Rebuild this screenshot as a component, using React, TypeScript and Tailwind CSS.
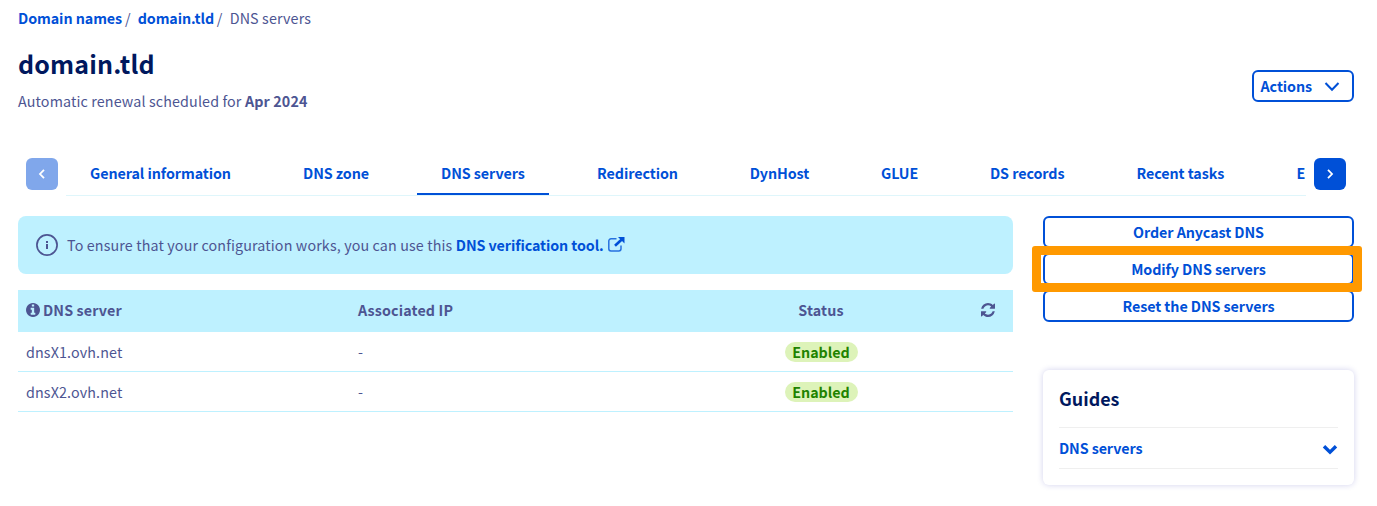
import type { ReactNode } from "react";

const TABS: { label: string; width: string; active?: boolean }[] = [
  { label: "General information", width: "w-[189px]" },
  { label: "DNS zone", width: "w-[114px]" },
  { label: "DNS servers", width: "w-[132px]", active: true },
  { label: "Redirection", width: "w-[128.7px]" },
  { label: "DynHost", width: "w-[107.3px]" },
  { label: "GLUE", width: "w-[85px]" },
  { label: "DS records", width: "w-[122.5px]" },
  { label: "Recent tasks", width: "w-[136px]" },
  { label: "E", width: "w-[58px]" },
];

const SERVERS = ["dnsX1.ovh.net", "dnsX2.ovh.net"];

const COLS = "grid grid-cols-[332px_387px_152px_1fr] items-center px-2";

function InfoOutline() {
  return (
    <svg width="22" height="22" viewBox="0 0 22 22" fill="none" className="block shrink-0">
      <circle cx="11" cy="11" r="10.1" stroke="#4d5592" strokeWidth="1.7" />
      <path d="M10 7h2v2h-2zM10 10h2v5h-2z" fill="#4d5592" />
    </svg>
  );
}

function InfoSolid() {
  return (
    <svg width="14" height="14" viewBox="0 0 1536 1536" className="block shrink-0" fill="#4d5592">
      <path d="M1024 1248v-160q0-14-9-23t-23-9h-96V544q0-14-9-23t-23-9H544q-14 0-23 9t-9 23v160q0 14 9 23t23 9h96v320h-96q-14 0-23 9t-9 23v160q0 14 9 23t23 9h448q14 0 23-9t9-23zM896 352V192q0-14-9-23t-23-9H672q-14 0-23 9t-9 23v160q0 14 9 23t23 9h192q14 0 23-9t9-23zm640 416q0 209-103 385.500T1153.500 1433 768 1536t-385.500-103T103 1153.500 0 768t103-385.500T382.500 103 768 0t385.500 103T1433 382.500 1536 768z" />
    </svg>
  );
}

function Refresh() {
  return (
    <svg width="14" height="14" viewBox="0 0 1536 1536" className="block" fill="#4d5592">
      <path d="M1511 928q0 5-1 7-64 268-268 434.500T764 1536q-146 0-282.500-55T238 1324l-129 129q-19 19-45 19t-45-19-19-45V960q0-26 19-45t45-19h448q26 0 45 19t19 45-19 45l-137 137q71 66 161 102t187 36q134 0 250-65t186-179q11-17 53-117 8-23 30-23h192q13 0 22.500 9.500t9.500 22.500zm25-800v448q0 26-19 45t-45 19h-448q-26 0-45-19t-19-45 19-45l138-138Q969 256 768 256q-134 0-250 65T332 500q-11 17-53 117-8 23-30 23H50q-13 0-22.500-9.500T18 608v-7q65-268 270-434.500T768 0q146 0 284 55.500T1297 212l130-129q19-19 45-19t45 19 19 45z" />
    </svg>
  );
}

function ExternalLink() {
  return (
    <svg width="17" height="15" viewBox="0 0 17 15" fill="none" className="block shrink-0">
      <path d="M8.500 1.800H3A2.200 2.200 0 0 0 .8 4v7.800A2.200 2.200 0 0 0 3 14h7.800a2.200 2.200 0 0 0 2.200-2.200V8.500" stroke="#0050d7" strokeOpacity=".8" strokeWidth="1.500" />
      <path d="M7 8.800 14 2.200" stroke="#0050d7" strokeWidth="2.600" />
      <path d="M10 0H16.500V6.500Z" fill="#0050d7" />
    </svg>
  );
}

function OutlineButton({ children }: { children: ReactNode }) {
  return (
    <button className="flex h-8 w-full items-center justify-center rounded-md border-2 border-[#0050d7] bg-white font-bold leading-6 tracking-[-0.07px] text-[#0050d7]">
      {children}
    </button>
  );
}

export default function App() {
  return (
    <main className="h-[506px] w-[1377px] overflow-hidden whitespace-nowrap bg-white font-['Noto_Sans_CJK_SC','Noto_Sans',sans-serif] text-[14.3px] leading-6 tracking-[0.13px] text-[#4d5592]">
      <nav className="flex h-[23px] pl-[18px] pt-[6px]">
        <a className="w-[107px] font-bold tracking-[-0.07px] text-[#0050d7]">Domain names</a>
        <span className="w-[12.700px]">/</span>
        <a className="w-[79px] font-bold tracking-[-0.1px] text-[#0050d7]">domain.tld</a>
        <span className="w-[13px]">/</span>
        <span>DNS servers</span>
      </nav>

      <header className="flex h-[135px] justify-between pl-[18px] pr-[23px]">
        <div className="pt-6">
          <h1 className="text-[25px] font-bold leading-8 tracking-[0.15px] text-[#00185e]">domain.tld</h1>
          <p className="pt-[10px]">
            Automatic renewal scheduled for <strong className="font-bold">Apr 2024</strong>
          </p>
        </div>
        <button className="mt-[47px] flex h-8 w-[102px] items-center justify-between rounded-md border-2 border-[#0050d7] pl-[6.500px] pr-3 font-bold tracking-[-0.07px] text-[#0050d7]">
          Actions
          <svg width="16" height="10" viewBox="0 0 16 10" fill="none" className="mt-0.5">
            <path d="m1.500 1 6.500 6.800L14.500 1" stroke="#0050d7" strokeWidth="2" />
          </svg>
        </button>
      </header>

      <div className="flex h-[38px] pl-[26px] pr-[31px]">
        <button className="flex size-8 shrink-0 items-center justify-center rounded-md bg-[#80a7eb]">
          <svg width="8" height="10" viewBox="0 0 8 10" fill="none">
            <path d="M6 .8 2 5l4 4.200" stroke="white" strokeWidth="1.800" />
          </svg>
        </button>
        <div className="mx-2 flex flex-1 gap-6 overflow-hidden border-b border-[#dff6fb]">
          {TABS.map((tab) => (
            <a
              key={tab.label}
              className={`${tab.width} shrink-0 border-b-2 px-6 pt-[3px] font-bold tracking-[-0.07px] text-[#0050d7] ${
                tab.active ? "border-[#0050d7]" : "border-transparent"
              }`}
            >
              {tab.label}
            </a>
          ))}
        </div>
        <button className="flex size-8 shrink-0 items-center justify-center rounded-md bg-[#0050d7]">
          <svg width="8" height="10" viewBox="0 0 8 10" fill="none">
            <path d="m2 .8 4 4.200-4 4.200" stroke="white" strokeWidth="1.800" />
          </svg>
        </button>
      </div>

      <div className="flex gap-[30px] pl-[18px] pr-[23px] pt-5">
        <section className="w-[995px]">
          <div className="flex h-[58px] items-center rounded-lg bg-[#bef1ff] pl-[18px]">
            <InfoOutline />
            <p className="ml-[9px]">
              To ensure that your configuration works, you can use this{" "}
              <a className="font-bold tracking-[-0.09px] text-[#0050d7]">DNS verification tool.</a>
            </p>
            <span className="-mt-0.5 ml-1">
              <ExternalLink />
            </span>
          </div>

          <div className="mt-4">
            <div className={`${COLS} h-[42px] bg-[#bef1ff] pb-0.5 font-bold`}>
              <div className="flex items-center gap-[3px]">
                <InfoSolid />
                DNS server
              </div>
              <div>Associated IP</div>
              <div className="text-center">Status</div>
              <div className="flex justify-end pr-[10px]">
                <Refresh />
              </div>
            </div>
            {SERVERS.map((name) => (
              <div key={name} className={`${COLS} h-10 border-b border-[#bef1ff]`}>
                <div>{name}</div>
                <div>-</div>
                <div className="flex justify-center">
                  <span className="flex h-5 w-[73px] items-center justify-center rounded-full bg-[#ddf3b9] font-bold tracking-normal text-[#1f8300]">
                    Enabled
                  </span>
                </div>
              </div>
            ))}
          </div>
        </section>

        <aside className="w-[311px]">
          <div className="relative flex flex-col gap-[5px]">
            <OutlineButton>Order Anycast DNS</OutlineButton>
            <OutlineButton>Modify DNS servers</OutlineButton>
            <OutlineButton>Reset the DNS servers</OutlineButton>
            <div className="pointer-events-none absolute -left-[11px] top-[30px] h-[46px] w-[330px] rounded-[3px] border-[9px] border-[#ff9900]" />
          </div>

          <div className="mt-12 h-[115px] rounded-md bg-white px-4 pt-[14px] shadow-[0_0_6px_rgba(0,0,160,0.18)]">
            <h2 className="text-[17.900px] font-bold leading-7 tracking-normal text-[#00185e]">Guides</h2>
            <div className="mt-[15px] flex h-[42px] items-center justify-between border-y border-[#efefef] font-bold tracking-[-0.1px] text-[#0050d7]">
              DNS servers
              <svg width="16" height="11" viewBox="0 0 16 11" fill="none" className="mt-0.5">
                <path d="m2 2.200 6 6 6-6" stroke="#0050d7" strokeWidth="3.400" />
              </svg>
            </div>
          </div>
        </aside>
      </div>
    </main>
  );
}
